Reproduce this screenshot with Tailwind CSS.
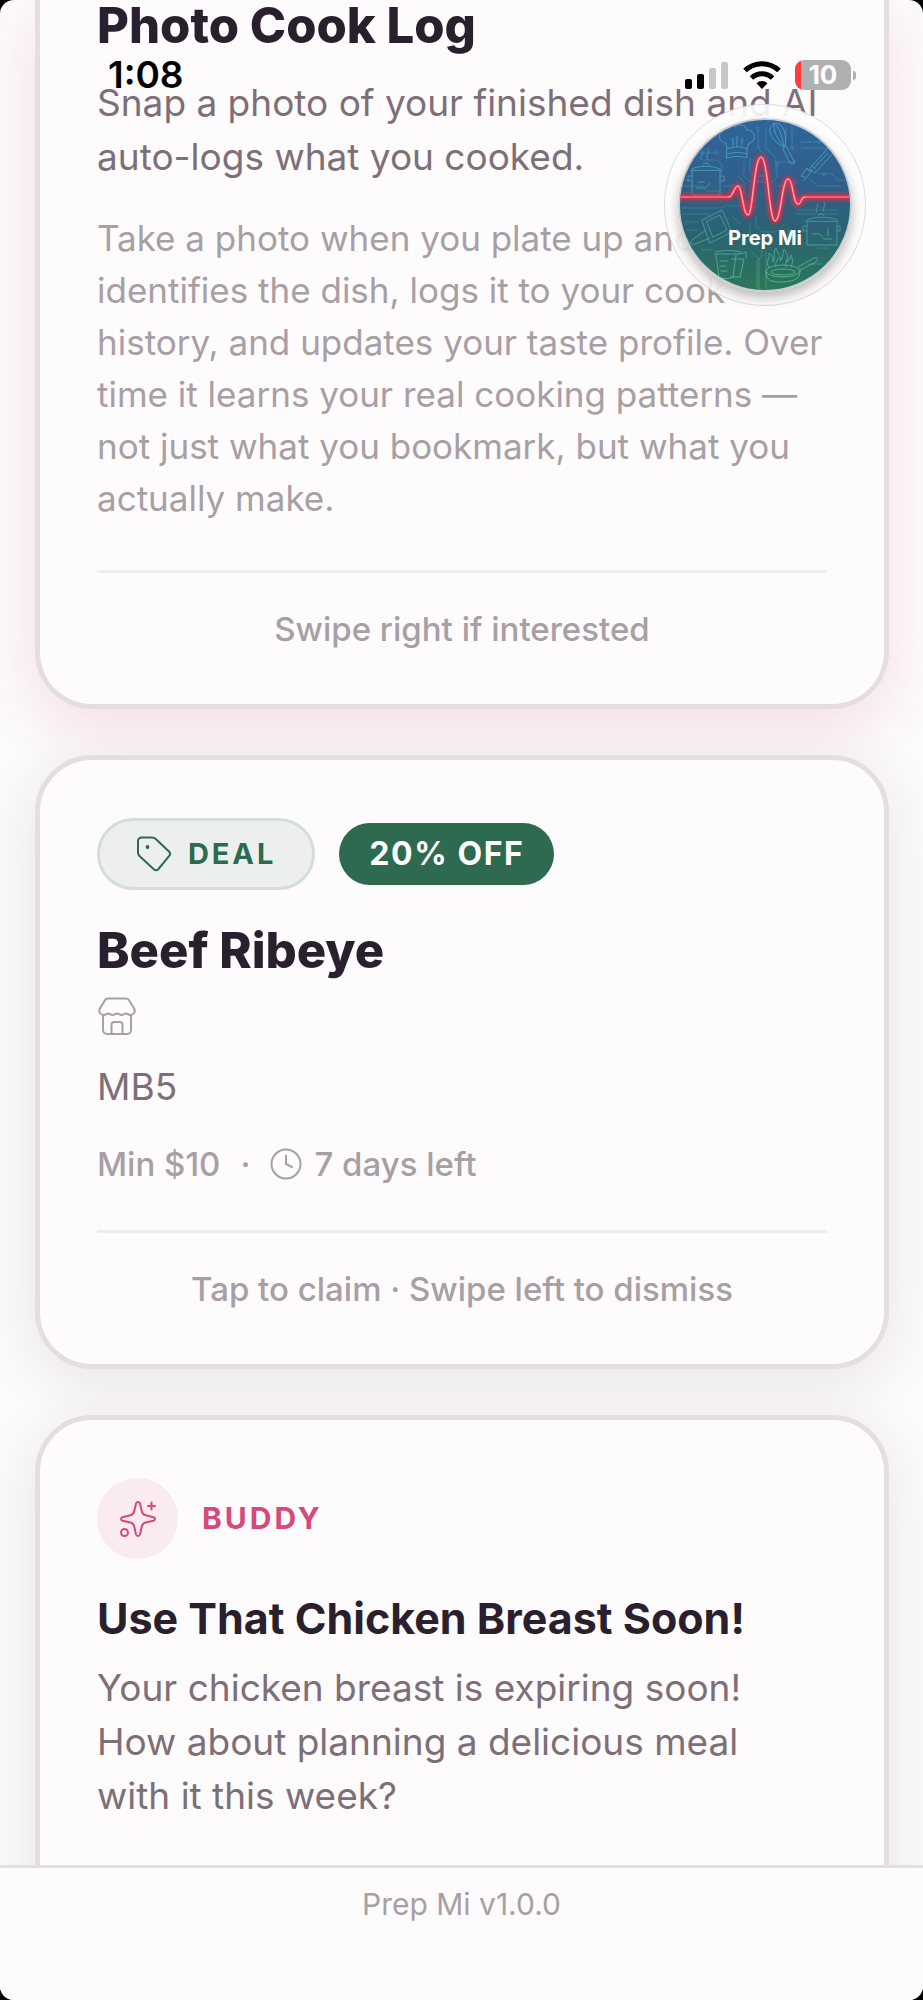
<!DOCTYPE html>
<html lang="en">
    <head>
        <meta charset="UTF-8" />
        <meta name="viewport" content="width=device-width, initial-scale=1.0" />
        <title>Prep Mi</title>
        <script src="https://cdn.jsdelivr.net/npm/@tailwindcss/browser@4"></script>
    </head>
    <body class="bg-black font-['Inter','Liberation_Sans',sans-serif]">
        <div
            class="relative h-screen overflow-hidden rounded-[14px] bg-[#fcfafb] flex flex-col"
        >
            <!-- Card feed -->
            <main
                class="flex-1 min-h-0 overflow-hidden pl-[35px] pr-[34px] flex flex-col gap-[46px]"
            >
                <article
                    class="shrink-0 border-[5px] border-t-0 border-[#e6dde1] rounded-b-[57px] bg-[#fdfbfc] px-[57px] shadow-[0_19px_57px_rgba(215,60,100,0.14)]"
                >
                    <h2
                        class="text-[49px] leading-[52px] font-extrabold text-[#2a1f2d]"
                    >
                        Photo Cook Log
                    </h2>
                    <p class="mt-6 text-[37px] leading-[54px] text-[#7d6f77]">
                        Snap a photo of your finished dish and AI auto-logs what
                        you cooked.
                    </p>
                    <p class="mt-7 text-[35px] leading-[52px] text-[#a89fa4]">
                        Take a photo when you plate up and AI identifies the
                        dish, logs it to your cook history, and updates your
                        taste profile. Over time it learns your real cooking
                        patterns — not just what you bookmark, but what you
                        actually make.
                    </p>
                    <p
                        class="mt-[46px] border-t-[3px] border-[#f0ecef] pt-9 pb-[55px] text-center text-[33px] leading-10 font-medium text-[#a89fa4]"
                    >
                        Swipe right if interested
                    </p>
                </article>

                <article
                    class="shrink-0 border-[5px] border-[#e6dde1] rounded-[57px] bg-[#fdfbfc] px-[57px] pt-[58px] shadow-[0_12px_57px_rgba(60,40,50,0.1)]"
                >
                    <div class="flex items-center gap-6">
                        <span
                            class="flex items-center gap-4 h-[72px] px-9 rounded-full border-[3px] border-[#d3dedb] bg-[#ecefee] text-[29px] font-bold tracking-widest text-[#2d6a4f]"
                        >
                            <svg
                                class="size-9"
                                viewBox="0 0 36 36"
                                fill="none"
                                stroke="currentColor"
                                stroke-width="2"
                                stroke-linejoin="round"
                            >
                                <path
                                    d="M2 5a3.500 3.500 0 0 1 3.500-3.500H16c1.500 0 2.500.5 3.500 1.300L33 15.500c1.700 1.700 1.700 3 0 4.700L22.500 33c-1.400 1.600-3.200 1.600-4.700.2L3.500 20C2.500 19 2 18 2 16.500Z"
                                />
                                <circle
                                    cx="11.500"
                                    cy="11"
                                    r="1.900"
                                    fill="currentColor"
                                    stroke="none"
                                />
                            </svg>
                            DEAL
                        </span>
                        <span
                            class="flex items-center h-[62px] px-[30px] rounded-full bg-[#2d6a4f] text-[32px] font-bold tracking-wider text-white"
                            >20% OFF</span
                        >
                    </div>
                    <h2
                        class="mt-8 text-[49px] leading-[58px] font-extrabold text-[#2a1f2d]"
                    >
                        Beef Ribeye
                    </h2>
                    <svg
                        class="mt-4 size-10 text-[#a89fa4]"
                        viewBox="0 0 40 40"
                        fill="none"
                        stroke="currentColor"
                        stroke-width="2"
                        stroke-linecap="round"
                        stroke-linejoin="round"
                    >
                        <path
                            d="M11 2.500h18c1.500 0 2.300.6 3 1.700l5 8c2 3.800-.5 6.800-4 6.800-2 0-2.500-1.500-4.200-1.500S26.500 19 24.500 19s-2.800-1.500-4.500-1.500S17.500 19 15.500 19s-2.600-1.500-4.300-1.500S9 19 7 19c-3.500 0-6-3-4-6.800l5-8c.7-1.100 1.500-1.700 3-1.700Z"
                        />
                        <path
                            d="M6 19.500V34a4 4 0 0 0 4 4h20a4 4 0 0 0 4-4V19.500M14.500 38V29a3 3 0 0 1 3-3h5a3 3 0 0 1 3 3v9"
                        />
                    </svg>
                    <p class="mt-6 text-[37px] leading-[54px] text-[#7d6f77]">
                        MB5
                    </p>
                    <div
                        class="mt-[30px] flex items-center text-[33px] leading-10 font-medium text-[#a89fa4]"
                    >
                        <span>Min $10</span>
                        <span class="mx-5">·</span>
                        <svg
                            class="size-8 mr-3"
                            viewBox="0 0 32 32"
                            fill="none"
                            stroke="currentColor"
                            stroke-width="2"
                            stroke-linecap="round"
                            stroke-linejoin="round"
                        >
                            <circle cx="16" cy="16" r="14.500" />
                            <path d="M16 7.500V16l6 3" />
                        </svg>
                        <span>7 days left</span>
                    </div>
                    <p
                        class="mt-[46px] border-t-[3px] border-[#f0ecef] pt-9 pb-[55px] text-center text-[33px] leading-10 font-medium text-[#a89fa4]"
                    >
                        Tap to claim · Swipe left to dismiss
                    </p>
                </article>

                <article
                    class="shrink-0 border-[5px] border-[#e6dde1] rounded-[57px] bg-[#fdfbfc] px-[57px] pt-[58px] pb-40 shadow-[0_12px_57px_rgba(60,40,50,0.1)]"
                >
                    <div class="flex items-center gap-6 text-[#d54a7b]">
                        <span
                            class="flex items-center justify-center size-[81px] rounded-full bg-[#f9ebf0]"
                        >
                            <svg
                                class="size-9"
                                viewBox="0 0 36 36"
                                fill="none"
                                stroke="currentColor"
                                stroke-width="2"
                                stroke-linecap="round"
                                stroke-linejoin="round"
                            >
                                <path
                                    d="M16 2.500c.8-2 3.200-2 4 0l1.700 7.500c.5 2.300 1.800 3.800 4 4.300l7.800 1.900c2 .8 2 2.800 0 3.600l-7.800 1.700c-2.200.5-3.500 2-4 4.300L20 33.500c-.8 2-3.200 2-4 0l-1.700-7.700c-.5-2.300-1.800-3.800-4-4.300L2.500 19.800c-2-.8-2-2.800 0-3.600l7.800-1.900c2.200-.5 3.500-2 4-4.300Z"
                                />
                                <path d="M31.500 1.500v7M28 5h7" />
                                <circle cx="4.500" cy="31.500" r="3.500" />
                            </svg>
                        </span>
                        <span class="text-[30px] font-bold tracking-widest"
                            >BUDDY</span
                        >
                    </div>
                    <h2
                        class="mt-8 text-[43px] leading-[54px] font-bold text-[#2a1f2d]"
                    >
                        Use That Chicken Breast Soon!
                    </h2>
                    <p
                        class="mt-4 pr-6 text-[37px] leading-[54px] text-[#7d6f77]"
                    >
                        Your chicken breast is expiring soon! How about planning
                        a delicious meal with it this week?
                    </p>
                </article>
            </main>

            <footer
                class="relative h-[135px] shrink-0 border-t-[3px] border-[#e6dde1] bg-[#fdfbfc] pt-4 text-center text-[30px] leading-10 text-[#a89fa4]"
            >
                Prep Mi v1.0.0
            </footer>

            <!-- Phone status bar -->
            <div
                class="absolute inset-x-0 top-[53px] h-11 pl-[108px] pr-[67px] flex items-center justify-between"
            >
                <span class="text-[37px] font-semibold text-black">1:08</span>
                <div class="flex items-center gap-[14px]">
                    <svg class="w-11 h-7" viewBox="0 0 44 28">
                        <rect x="0" y="18" width="7" height="10" rx="2" />
                        <rect x="12" y="13" width="7" height="15" rx="2" />
                        <g fill="#c8c6c8">
                            <rect x="24" y="7" width="7" height="21" rx="2" />
                            <rect x="36" y="1" width="7" height="27" rx="2" />
                        </g>
                    </svg>
                    <svg class="w-[38px] h-7" viewBox="0 0 38 28">
                        <g fill="none" stroke="#000" stroke-width="5">
                            <path d="M2 9.500a24.500 24.500 0 0 1 34 0" />
                            <path d="M8.500 17a15 15 0 0 1 21 0" />
                        </g>
                        <path d="M19 28l-5.500-5.700a8 8 0 0 1 11 0Z" />
                    </svg>
                    <div class="flex items-center gap-[2px]">
                        <div
                            class="w-14 h-[30px] rounded-[9px] flex items-center justify-center bg-linear-to-r from-[#ff3b3b] from-10% to-[#b1b0b1] to-10% text-[26px] leading-none font-bold text-white"
                        >
                            10
                        </div>
                        <div
                            class="w-[3px] h-[9px] rounded-r-full bg-[#b1b0b1]"
                        ></div>
                    </div>
                </div>
            </div>

            <!-- Floating assistant button -->
            <button
                type="button"
                aria-label="Prep Mi"
                class="absolute top-[104px] right-[57px] size-[202px] rounded-full border border-[#dddadb] bg-[#fffefe]/90 flex items-center justify-center"
            >
                <svg
                    class="size-[174px] rounded-full shadow-[0_6px_12px_rgba(60,60,50,0.35)]"
                    viewBox="0 0 174 174"
                    fill="none"
                    stroke-linecap="round"
                    stroke-linejoin="round"
                >
                    <defs>
                        <linearGradient id="sea" x1="0" y1="0" x2="0" y2="1">
                            <stop offset="0" stop-color="#2f659a" />
                            <stop offset="0.35" stop-color="#315f8c" />
                            <stop offset="0.65" stop-color="#2b6273" />
                            <stop offset="1" stop-color="#2d7659" />
                        </linearGradient>
                        <linearGradient
                            id="lines"
                            gradientUnits="userSpaceOnUse"
                            x1="0"
                            y1="0"
                            x2="0"
                            y2="174"
                        >
                            <stop offset="0" stop-color="#4fb6cf" />
                            <stop offset="0.6" stop-color="#4aa5a8" />
                            <stop offset="1" stop-color="#5ed695" />
                        </linearGradient>
                        <clipPath id="disc"><circle cx="87" cy="87" r="85" /></clipPath>
                        <filter
                            id="glow"
                            filterUnits="userSpaceOnUse"
                            x="0"
                            y="20"
                            width="174"
                            height="110"
                        >
                            <feGaussianBlur stdDeviation="2.200" />
                        </filter>
                    </defs>
                    <circle
                        cx="87"
                        cy="87"
                        r="86"
                        fill="url(#sea)"
                        stroke="#c3cdd0"
                        stroke-width="2"
                    />
                    <g clip-path="url(#disc)" stroke="url(#lines)">
                        <!-- Circuit traces -->
                        <g opacity="0.4">
                            <path
                                d="M20 35h18M27 42h12l5 5v8M66 44v14l6 6h22l5-5V48M72 40v14l4 4h14M80 8v22l6 6M88 10v20l10 10v12M114 8v20M108 10v12M122 24h18M124 30h26M140 20h14M5 62h6M4 68h20l5 5h12M4 90h40l6-5M4 96h26l6 6M60 58l6 6v12M132 62l8 6h22M140 56h14l6 6h8M112 84l8 8h40M118 96h42M72 104v16M78 98v10l6 6h14l8-8M54 98l8 8M110 110v18M114 118h8M8 112h12M6 104h14M24 132h10M84 132v6l-5 5v26M74 134l7 7v30M88 134v36M140 130h10M130 146h14M50 88h22M46 68h16M100 68h14l5-5M96 44h20"
                            />
                            <circle cx="39" cy="35" r="1.500" />
                            <circle cx="141" cy="24" r="1.500" />
                            <circle cx="114" cy="30" r="1.500" />
                            <circle cx="99" cy="46" r="1.500" />
                            <circle cx="62" cy="68" r="1.500" />
                            <circle cx="116" cy="44" r="1.500" />
                            <circle cx="146" cy="56" r="1.500" />
                            <circle cx="72" cy="122" r="1.500" />
                        </g>
                        <g opacity="0.75">
                            <!-- Chef hat -->
                            <path
                                d="M49 31l-1-6c-8-1-9-11-1-13 1-5 7-6 10-3 4-4 11-2 12 3 9 0 10 12 2 13l-2 6M49 31c7-3 14-3 20 0v9c-6-2-14-2-20 0ZM55 27v-7M64 27v-7M59 29V18M50 36c6-2 13-2 19 0"
                            />
                            <!-- Whisk -->
                            <path
                                d="M106 29c-7-3-13-9-14-15-1-9 9-12 13-4 3 6 3 13 2 18ZM106 28C99 21 95 13 96 5M106 28c-2-8-3-15-8-21M105 30l3-2 8 15c0 3-2 4-4 2Z"
                            />
                            <!-- Knife -->
                            <path
                                d="M127 59l-4-1 6-8 2 3 3-1-5 7-4 4M132 50l20-22 5 5-20 22ZM136 50l14-15M134 47l3 4"
                            />
                            <!-- Stock pots -->
                            <path
                                d="M13 52c2-5 27-5 30 0ZM14 53v24h28V53M14 58h-4v5h4M42 58h4v5h-4M25 47c0-3 6-3 6 0M24 42c-4-4 3-5 0-9M30 42c-4-5 3-6 0-11M18 70h10l4-5M20 64h6"
                            />
                            <path
                                d="M128 103c2-5 29-5 32 0ZM129 104v23h30v-23M129 108h-4v5h4M159 108h3v5h-3M140 98c0-3 6-3 6 0M139 94c-3-4 3-5 0-8M146 94c-3-4 3-6 0-10M134 116h8l4 5h8M150 110v8"
                            />
                            <!-- Cutting board -->
                            <path
                                d="M24 102l20-10 10 22-22 11ZM29 103l13-6 7 15-14 7ZM28 112l-14 10c-3 3-1 6 3 4l15-6"
                            />
                            <!-- Measuring cups -->
                            <path
                                d="M36 136h26M38 137l3 22c4 2 10 2 14 0l3-22M42 143h8M42 148h6M43 153h6M54 141h12l-4 18h-9M62 136l6-2v6M37 134c8-2 18-2 26 0"
                            />
                            <!-- Frying pan -->
                            <ellipse cx="105" cy="153" rx="17" ry="6" />
                            <path
                                d="M88 153c0 6 2 9 6 10 8 2 16 1 22-1 5-2 6-5 6-9M120 149l16-9c4-2 5 2 2 4l-16 8M91 150c-4-7 1-9 0-15 4 3 4 6 4 9 3-5-1-9 3-14 1 5 5 7 4 13 4-4 2-8 4-12 3 5 5 8 3 13 3-2 3-5 4-7 2 5 2 8 0 12M98 149c-2-4 2-6 2-9M108 149c-2-3 1-5 1-8"
                            />
                            <ellipse cx="105" cy="154" rx="12" ry="3" />
                        </g>
                    </g>
                    <!-- Heartbeat line -->
                    <g clip-path="url(#disc)">
                        <path
                            d="M0 79h51c4 0 5-11 9-11s5 29 10 29 6-58 13-58 8 64 14 64 7-42 13-42c5 0 5 25 10 25 4 0 2-7 7-7h47"
                            stroke="#ff2440"
                            stroke-width="5"
                            filter="url(#glow)"
                        />
                        <path
                            d="M0 79h51c4 0 5-11 9-11s5 29 10 29 6-58 13-58 8 64 14 64 7-42 13-42c5 0 5 25 10 25 4 0 2-7 7-7h47"
                            stroke="#ff5b6e"
                            stroke-width="2"
                        />
                        <path
                            d="M51 79c4 0 5-11 9-11s5 29 10 29 6-58 13-58 8 64 14 64 7-42 13-42c5 0 5 25 10 25 4 0 2-7 7-7"
                            stroke="#ffb3bb"
                            stroke-width="1"
                        />
                    </g>
                    <text
                        x="87"
                        y="127"
                        text-anchor="middle"
                        fill="#fff"
                        class="text-[20px] font-bold"
                    >
                        Prep Mi
                    </text>
                </svg>
            </button>
        </div>
    </body>
</html>
